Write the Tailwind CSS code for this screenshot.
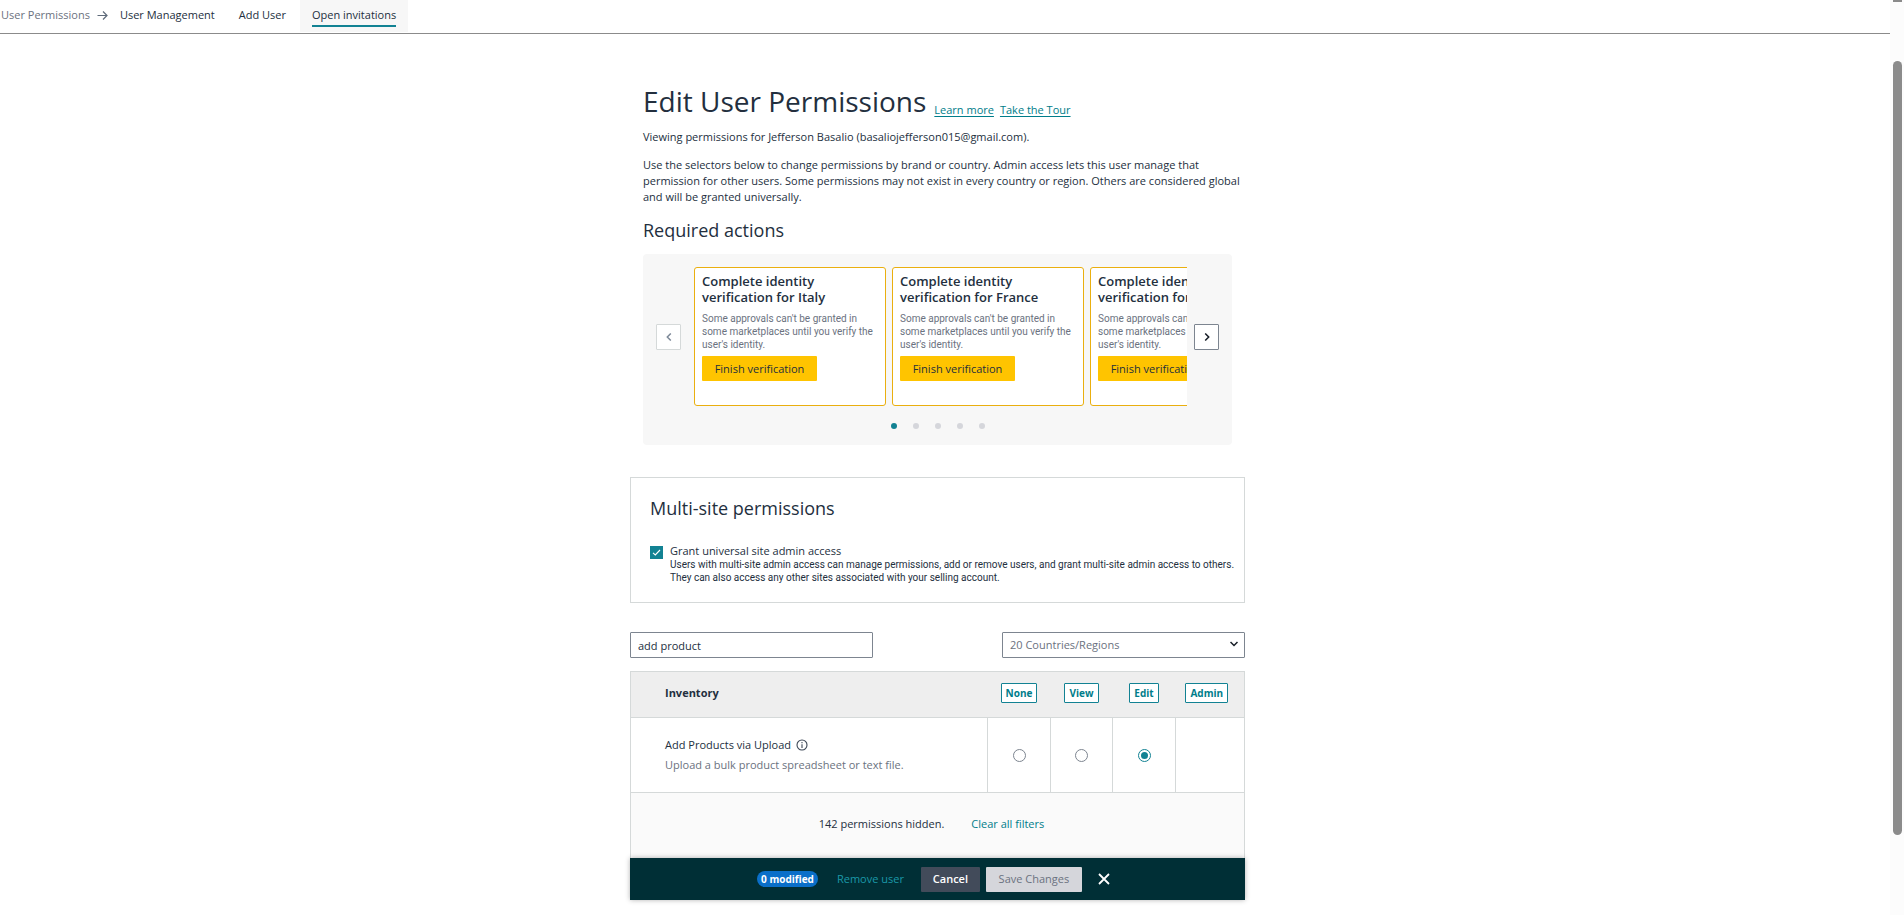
<!DOCTYPE html>
<html lang="en">

<head>
  <meta charset="UTF-8" />
  <meta name="viewport" content="width=device-width, initial-scale=1.0" />
  <title>Edit User Permissions</title>
  <script src="https://cdn.jsdelivr.net/npm/@tailwindcss/browser@4"></script>
</head>

<body class="flex h-screen overflow-hidden bg-white font-['Open_Sans',sans-serif] text-[11px] leading-4 text-[#232f3e]">
  <div class="flex-1 min-w-0 flex flex-col">
    <nav class="flex h-[34px] shrink-0 border-b border-[#8b8b8b]">
      <div class="flex h-8 pt-[7px] pl-px">
        <a href="#" class="text-[#6b7280]">User Permissions</a>
        <svg class="ml-[7px] mt-[3px] size-[11px]" viewBox="0 0 11 11" fill="none" stroke="#5f6b7a" stroke-width="1.2">
          <path d="M0.5 5.5H10M6 1.5L10 5.5L6 9.5" />
        </svg>
      </div>
      <a href="#" class="h-8 pt-[7px] px-3">User Management</a>
      <a href="#" class="h-8 pt-[7px] px-3">Add User</a>
      <a href="#" class="ml-[2px] h-8 bg-[#f7f7f7] px-3 pt-[7px]">
        <span class="block border-b-2 border-[#128293] pb-[2px]">Open invitations</span>
      </a>
    </nav>

    <main class="flex-1 pr-[15px]">
      <div class="mx-auto flex h-full w-full max-w-[615px] flex-col">
        <section class="px-[13px] pt-[49px]">
          <div class="flex items-end">
            <h1 class="text-[28px] leading-9">Edit User Permissions</h1>
            <a href="#" class="ml-2 pb-px text-[#007d8a] underline underline-offset-2">Learn more</a>
            <a href="#" class="ml-1.5 pb-px text-[#007d8a] underline underline-offset-2">Take the Tour</a>
          </div>
          <p class="mt-2.5">Viewing permissions for Jefferson Basalio (basaliojefferson015@gmail.com).</p>
          <p class="mt-3 whitespace-nowrap">Use the selectors below to change permissions by brand or country. Admin access lets this user manage that<br>permission for other users. Some permissions may not exist in every country or region. Others are considered global<br>and will be granted universally.</p>
          <h2 class="mt-[13px] text-[18px] leading-6">Required actions</h2>

          <div class="mt-3 rounded bg-[#f7f7f7] px-[13px] pt-[13px] pb-4">
            <div class="flex items-center">
              <button type="button" aria-label="Previous" class="flex h-[26px] w-[25px] shrink-0 items-center justify-center rounded-[1px] border border-[#d5d9d9] bg-white">
                <svg class="size-2" viewBox="0 0 8 8" fill="none" stroke="#7d8998" stroke-width="1.5"><path d="M5.8 0.5L2.3 4L5.8 7.5" /></svg>
              </button>

              <div class="ml-[13px] mr-[7px] flex min-w-0 flex-1 gap-[6px] overflow-hidden">
                <article class="h-[139px] w-[192px] shrink-0 rounded-[3px] border border-[#eaaf0f] bg-white px-[7px] pt-[5px]">
                  <h3 class="text-[13px] font-semibold">Complete identity<br>verification for Italy</h3>
                  <p class="mt-[7px] whitespace-nowrap font-[Roboto,sans-serif] text-[10px] leading-[13px] text-[#6b7280]">Some approvals can't be granted in<br>some marketplaces until you verify the<br>user's identity.</p>
                  <button type="button" class="mt-[5px] h-[25px] w-[115px] rounded-[1px] bg-[#ffc400]">Finish verification</button>
                </article>
                <article class="h-[139px] w-[192px] shrink-0 rounded-[3px] border border-[#eaaf0f] bg-white px-[7px] pt-[5px]">
                  <h3 class="text-[13px] font-semibold">Complete identity<br>verification for France</h3>
                  <p class="mt-[7px] whitespace-nowrap font-[Roboto,sans-serif] text-[10px] leading-[13px] text-[#6b7280]">Some approvals can't be granted in<br>some marketplaces until you verify the<br>user's identity.</p>
                  <button type="button" class="mt-[5px] h-[25px] w-[115px] rounded-[1px] bg-[#ffc400]">Finish verification</button>
                </article>
                <article class="h-[139px] w-[192px] shrink-0 rounded-[3px] border border-[#eaaf0f] bg-white px-[7px] pt-[5px]">
                  <h3 class="text-[13px] font-semibold">Complete identity<br>verification for Spain</h3>
                  <p class="mt-[7px] whitespace-nowrap font-[Roboto,sans-serif] text-[10px] leading-[13px] text-[#6b7280]">Some approvals can't be granted in<br>some marketplaces until you verify the<br>user's identity.</p>
                  <button type="button" class="mt-[5px] h-[25px] w-[115px] rounded-[1px] bg-[#ffc400]">Finish verification</button>
                </article>
              </div>

              <button type="button" aria-label="Next" class="flex h-[26px] w-[25px] shrink-0 items-center justify-center rounded-[1px] border border-[#7d8590] bg-white">
                <svg class="size-2" viewBox="0 0 8 8" fill="none" stroke="#161d26" stroke-width="1.5"><path d="M2.2 0.5L5.7 4L2.2 7.5" /></svg>
              </button>
            </div>
            <div class="mt-[17px] flex justify-center gap-4">
              <span class="size-1.5 rounded-full bg-[#128293]"></span>
              <span class="size-1.5 rounded-full bg-[#d5d6db]"></span>
              <span class="size-1.5 rounded-full bg-[#d5d6db]"></span>
              <span class="size-1.5 rounded-full bg-[#d5d6db]"></span>
              <span class="size-1.5 rounded-full bg-[#d5d6db]"></span>
            </div>
          </div>
        </section>

        <section class="mt-8 border border-[#d5d9d9] px-[19px] pt-[18px] pb-[18px]">
          <h2 class="text-[18px] leading-6">Multi-site permissions</h2>
          <div class="mt-6 flex">
            <span class="relative mt-[2px] size-[13px] shrink-0">
              <input type="checkbox" id="universal" checked class="block size-[13px] appearance-none bg-[#128293]" />
              <svg class="pointer-events-none absolute inset-0 size-[13px]" viewBox="0 0 13 13" fill="none" stroke="#fff" stroke-width="1.1"><path d="M3 6.8L5.3 9L10 4" /></svg>
            </span>
            <div class="ml-[7px]">
              <label for="universal" class="block leading-[14px]">Grant universal site admin access</label>
              <p class="whitespace-nowrap font-[Roboto,sans-serif] text-[10px] leading-[13px]">Users with multi-site admin access can manage permissions, add or remove users, and grant multi-site admin access to others.<br>They can also access any other sites associated with your selling account.</p>
            </div>
          </div>
        </section>

        <div class="mt-[29px] flex justify-between">
          <input type="text" aria-label="Search permissions" value="add product" class="h-[26px] w-[243px] rounded-[1px] border border-[#7d8590] px-[7px]" />
          <div class="relative">
            <select aria-label="Countries/Regions" class="block h-[26px] w-[243px] appearance-none rounded-[1px] border border-[#7d8590] bg-white px-[7px] text-[#6b7280]">
              <option>20 Countries/Regions</option>
            </select>
            <svg class="pointer-events-none absolute right-[7px] top-[9px] h-[6px] w-2" viewBox="0 0 8 6" fill="none" stroke="#161d26" stroke-width="1.5"><path d="M0.5 1L4 4.5L7.5 1" /></svg>
          </div>
        </div>

        <table class="mt-[13px] w-full table-fixed border-collapse border border-[#d5d9d9]">
          <colgroup>
            <col />
            <col class="w-[63px]" />
            <col class="w-[62px]" />
            <col class="w-[63px]" />
            <col class="w-[69px]" />
          </colgroup>
          <thead>
            <tr class="h-[46px] border-b border-[#d5d9d9] bg-[#eee]">
              <th class="pl-[34px] pb-[3px] text-left font-bold">Inventory</th>
              <th class="pb-[3px]"><button type="button" class="h-5 rounded-[1px] border border-[#128293] bg-white px-1 text-[10px] font-bold text-[#007d8a]">None</button></th>
              <th class="pb-[3px]"><button type="button" class="h-5 rounded-[1px] border border-[#128293] bg-white px-1 text-[10px] font-bold text-[#007d8a]">View</button></th>
              <th class="pb-[3px]"><button type="button" class="h-5 rounded-[1px] border border-[#128293] bg-white px-1 text-[10px] font-bold text-[#007d8a]">Edit</button></th>
              <th class="pb-[3px] pr-1.5"><button type="button" class="h-5 rounded-[1px] border border-[#128293] bg-white px-1 text-[10px] font-bold text-[#007d8a]">Admin</button></th>
            </tr>
          </thead>
          <tbody>
            <tr class="h-[75px] border-b border-[#d5d9d9]">
              <td class="pl-[34px]">
                <div class="flex items-center">
                  Add Products via Upload
                  <svg class="ml-[5px] size-3" viewBox="0 0 12 12" fill="none" stroke="#3c4756"><circle cx="6" cy="6" r="5" stroke-width="1.1" /><path d="M6 5.3V9M6 3V4.2" stroke-width="1.1" /></svg>
                </div>
                <div class="mt-1 text-[#6b7280]">Upload a bulk product spreadsheet or text file.</div>
              </td>
              <td class="border-l border-[#d5d9d9]"><input type="radio" name="upload" aria-label="None" class="mx-auto block size-[13px] appearance-none rounded-full border border-[#7d8590]" /></td>
              <td class="border-l border-[#d5d9d9]"><input type="radio" name="upload" aria-label="View" class="mx-auto block size-[13px] appearance-none rounded-full border border-[#7d8590]" /></td>
              <td class="border-l border-[#d5d9d9]"><input type="radio" name="upload" aria-label="Edit" checked class="mx-auto block size-[13px] appearance-none rounded-full border border-[#128293] bg-[#128293] bg-clip-content p-[2px]" /></td>
              <td class="border-l border-[#d5d9d9]"></td>
            </tr>
          </tbody>
        </table>

        <div class="flex h-[65px] items-center justify-center gap-[27px] border-x border-[#d5d9d9] bg-[#fafafa] pb-[3px] pr-3">
          <span>142 permissions hidden.</span>
          <a href="#" class="text-[#007d8a]">Clear all filters</a>
        </div>

        <footer class="flex h-[42px] items-center justify-center bg-[#002f36] pr-2 shadow-[0_0_5px_rgba(0,0,0,0.3)]">
          <span class="flex h-4 items-center rounded-full bg-[#0a6fc9] px-1 text-[10px] font-bold text-white">0 modified</span>
          <a href="#" class="ml-[19px] text-[#1b98a8]">Remove user</a>
          <button type="button" class="ml-[17px] h-[25px] w-[59px] rounded-[1px] bg-[#424b5a] font-semibold text-white">Cancel</button>
          <button type="button" disabled class="ml-1.5 h-[25px] w-24 rounded-[1px] bg-[#d5d6db] text-[#6b7280]">Save Changes</button>
          <button type="button" aria-label="Close" class="ml-4">
            <svg class="size-3" viewBox="0 0 12 12" fill="none" stroke="#fff" stroke-width="1.8"><path d="M1 1L11 11M11 1L1 11" /></svg>
          </button>
        </footer>
      </div>
    </main>
  </div>

  <!-- scrollbar -->
  <div class="flex w-[14px] shrink-0 flex-col items-center bg-[#fcfcfc]">
    <div class="h-[2px] w-[9px] bg-[#8b8b8b]"></div>
    <div class="mt-[59px] mb-20 w-[9px] flex-1 rounded-full bg-[#8b8b8b]"></div>
  </div>
</body>

</html>
